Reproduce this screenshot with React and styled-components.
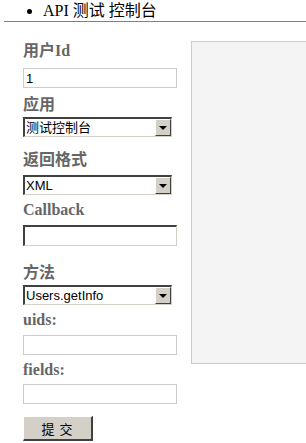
import React from 'react'
import styled, { createGlobalStyle } from 'styled-components'

const Global = createGlobalStyle`
  html, body {
    margin: 0;
    padding: 0;
    background: #fff;
    overflow: hidden;
  }
  body {
    font-family: "Liberation Serif", "Noto Sans CJK SC", serif;
    font-size: 16px;
    color: #000;
  }
`

const Page = styled.div`
  width: 306px;
  height: 443px;
  overflow: hidden;
`

const Menu = styled.ul`
  margin: 0;
  padding: 0 0 0 43px;
  list-style: disc;
  line-height: 19px;
`

const MenuItem = styled.li`
  font-size: 16px;
  padding-top: 1px;
`

const Divider = styled.div`
  height: 1px;
  margin: 1px 0 0 4px;
  background: #808080;
`

const Main = styled.div`
  display: flex;
  align-items: flex-start;
  gap: 14px;
  padding: 19px 0 0 23px;
`

const Form = styled.form`
  display: flex;
  flex-direction: column;
  width: 154px;
  flex-shrink: 0;
`

const Label = styled.div`
  margin-top: ${p => p.$gap || 0}px;
  height: 20px;
  line-height: 20px;
  font-weight: bold;
  font-size: 16px;
  color: #666;
  white-space: nowrap;
`

const TextBox = styled.input`
  box-sizing: border-box;
  margin: ${p => p.$gap || 0}px 0 0 0;
  width: 154px;
  height: ${p => p.$h || 20}px;
  padding: 0 2px;
  font-family: "Liberation Sans", "Noto Sans CJK SC", sans-serif;
  font-size: 13px;
  color: #000;
  background: #fff;
  outline: none;
  border: 1px solid #ccc;
  ${p => p.$inset && `
    border-style: solid;
    border-width: 2px 1px 1px 2px;
    border-color: #404040 #d4d0c8 #d4d0c8 #404040;
  `}
`

const Combo = styled.div`
  box-sizing: border-box;
  margin-top: ${p => p.$gap || 0}px;
  width: 149px;
  height: 20px;
  display: flex;
  align-items: stretch;
  border-style: solid;
  border-width: 2px 1px 1px 2px;
  border-color: #404040 #d4d0c8 #d4d0c8 #404040;
  background: #fff;
`

const ComboValue = styled.select`
  flex: 1;
  min-width: 0;
  appearance: none;
  border: none;
  outline: none;
  background: transparent;
  padding: 0 0 0 1px;
  margin: 0;
  font-family: "Liberation Sans", "Noto Sans CJK SC", sans-serif;
  font-size: 13px;
  color: #000;
`

const ArrowBtn = styled.span`
  box-sizing: border-box;
  width: 16px;
  display: flex;
  align-items: center;
  justify-content: center;
  background: #d4d0c8;
  border-style: solid;
  border-width: 1px;
  border-color: #fff #404040 #404040 #fff;
  &::after {
    content: '';
    border-left: 4px solid transparent;
    border-right: 4px solid transparent;
    border-top: 4px solid #000;
    margin-top: 1px;
  }
`

const Submit = styled.button`
  box-sizing: border-box;
  margin-top: ${p => p.$gap || 0}px;
  width: 70px;
  height: 25px;
  padding: 0;
  background: #d4d0c8;
  border-style: solid;
  border-width: 1px 2px 2px 1px;
  border-color: #fff #404040 #404040 #fff;
  font-family: "Noto Sans CJK SC", sans-serif;
  font-size: 13px;
  color: #000;
  letter-spacing: 1px;
`

const Panel = styled.div`
  flex-shrink: 0;
  width: 300px;
  height: 323px;
  box-sizing: border-box;
  background: #f4f4f4;
  border: 1px solid #ccc;
`

const Select = ({ gap, value }) => (
  <Combo $gap={gap}>
    <ComboValue defaultValue={value}>
      <option>{value}</option>
    </ComboValue>
    <ArrowBtn />
  </Combo>
)

const App = () => (
  <Page>
    <Global />
    <Menu>
      <MenuItem>API 测试 控制台</MenuItem>
    </Menu>
    <Divider />
    <Main>
      <Form onSubmit={e => e.preventDefault()}>
        <Label>用户Id</Label>
        <TextBox $gap={7} defaultValue="1" />
        <Label $gap={7}>应用</Label>
        <Select gap={2} value="测试控制台" />
        <Label $gap={13}>返回格式</Label>
        <Select gap={5} value="XML" />
        <Label $gap={5}>Callback</Label>
        <TextBox $gap={5} $h={21} $inset />
        <Label $gap={17}>方法</Label>
        <Select gap={2} value="Users.getInfo" />
        <Label $gap={5}>uids:</Label>
        <TextBox $gap={5} />
        <Label $gap={5}>fields:</Label>
        <TextBox $gap={4} />
        <Submit $gap={12} type="submit">提 交</Submit>
      </Form>
      <Panel />
    </Main>
  </Page>
)

export default App
